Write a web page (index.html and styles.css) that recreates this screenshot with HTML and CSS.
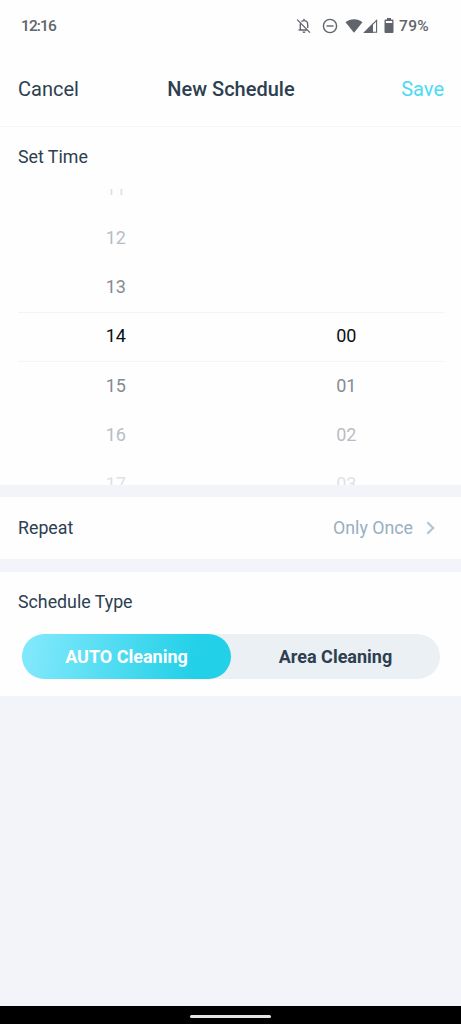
FILE: index.html
```html
<!DOCTYPE html>
<html lang="en">
<head>
<meta charset="utf-8">
<title>New Schedule</title>
<link rel="stylesheet" href="styles.css">
</head>
<body>
<div class="screen">
  <div class="status">
    <span class="clock">12:16</span>
    <div class="status-icons">
      <svg class="bell" width="16" height="16" viewBox="0 0 16 16" fill="none" stroke="currentColor" stroke-width="1.35">
        <path d="M1.2 1.6 14 14.6M5.5 3.6C6 3 7 2.6 8 2.6c2.300 0 3.700 1.700 3.700 3.900v3.400M4.300 5.400v6.300M2.600 12h9.200M8 .7v2"/>
        <path d="M6.500 13.500h3A1.500 1.500 0 0 1 6.500 13.500Z" fill="currentColor" stroke="none"/>
      </svg>
      <svg class="dnd" width="16" height="16" viewBox="0 0 16 16" fill="none" stroke="currentColor" stroke-width="1.4">
        <circle cx="8" cy="8" r="6.600"/><path d="M4.500 8h7"/>
      </svg>
      <svg class="wifi" width="18" height="14" viewBox="0 0 18 14" fill="currentColor"><path d="M.5 3.300C5.200-.7 12.800-.7 17.500 3.300L9 13.800Z"/></svg>
      <svg class="signal" width="15" height="14" viewBox="0 0 15 14"><path d="M1.700 13.300 13.600 1.400v11.900Z" fill="none" stroke="currentColor" stroke-width="1.100"/><path d="M.3 14 10 4.300V14Z" fill="currentColor"/></svg>
      <svg class="battery" width="10" height="15" viewBox="0 0 10 15" fill="currentColor"><path fill-rule="evenodd" d="M3 0h4v1.500h1.500q1 0 1 1V14q0 1-1 1h-7q-1 0-1-1V2.500q0-1 1-1H3ZM1.800 2.900v2.200h6.400V2.900Z"/></svg>
      <span class="percent">79%</span>
    </div>
  </div>
  <header class="header">
    <span class="cancel">Cancel</span>
    <h1 class="title">New Schedule</h1>
    <span class="save">Save</span>
  </header>
  <section class="time">
    <h2 class="label">Set Time</h2>
    <div class="picker">
      <div class="wheel">
        <span class="far">11</span><span class="mid">12</span><span class="near">13</span><span class="current">14</span><span class="near">15</span><span class="mid">16</span><span class="far">17</span>
      </div>
      <div class="wheel">
        <span></span><span></span><span></span><span class="current">00</span><span class="near">01</span><span class="mid">02</span><span class="far">03</span>
      </div>
      <div class="selection"></div>
    </div>
  </section>
  <section class="repeat">
    <h2 class="label">Repeat</h2>
    <span class="value">Only Once</span>
    <svg class="chevron" width="9" height="14" viewBox="0 0 9 14" fill="none" stroke="currentColor" stroke-width="2.2"><path d="m1.300 1.300 5.900 5.700-5.900 5.700"/></svg>
  </section>
  <section class="type">
    <h2 class="label">Schedule Type</h2>
    <div class="segments">
      <span class="segment active">AUTO Cleaning</span>
      <span class="segment">Area Cleaning</span>
    </div>
  </section>
  <div class="navbar"><div class="handle"></div></div>
</div>
</body>
</html>
```
FILE: styles.css
```css
* { box-sizing: border-box; }
body { margin: 0; font-family: Roboto, "Liberation Sans", sans-serif; color: #2d3f50; }
h1, h2 { margin: 0; font-weight: 400; }
svg { display: block; flex: none; }

.screen { height: 1024px; display: flex; flex-direction: column; background: #f3f4f9; overflow: hidden; }

.status { height: 52px; padding: 0 32px 1px 21px; display: flex; align-items: center; justify-content: space-between; background: #fefefe; color: #60656b; font-size: 15.5px; font-weight: 500; }
.clock { letter-spacing: -0.9px; }
.status-icons { display: flex; align-items: center; }
.percent { letter-spacing: 0.3px; }
.bell { margin-right: 10px; }
.dnd { margin-right: 7px; }
.wifi { margin-right: 0; }
.signal { margin-right: 6px; }
.battery { margin-right: 5px; }

.header { height: 75px; padding: 0 17px 0 18px; display: grid; grid-template-columns: 1fr auto 1fr; align-items: center; background: #fefefe; border-bottom: 1px solid #f4f5f6; font-size: 20px; line-height: 24px; }
.title { font-size: 20px; font-weight: 500; }
.save { color: #4cdaf2; text-align: right; }

.label { font-size: 17.8px; line-height: 22px; }

.time { height: 358px; padding-top: 19px; background: #fefefe; }
.time .label { padding-left: 18px; }
.picker { position: relative; height: 296px; margin-top: 21px; display: grid; grid-template-columns: 1fr 1fr; overflow: hidden; font-size: 18px; }
.wheel { height: 345.310px; margin-top: -25.660px; padding-left: 1px; display: grid; grid-template-rows: repeat(7, 1fr); place-items: center; }
.current { color: #0b0e12; }
.near { color: #868b91; }
.mid { color: #b8bdc3; }
.far { color: #dde2e8; }
.selection { position: absolute; left: 18px; right: 16px; top: 123px; height: 50px; border: solid #f3f4f5; border-width: 1px 0; }

.repeat { height: 62px; margin-top: 12px; padding: 0 26px 0 18px; display: flex; align-items: center; background: #fefefe; }
.repeat .label { padding-bottom: 1px; }
.value { margin-left: auto; padding-bottom: 2px; color: #98afc1; font-size: 17.8px; }
.chevron { margin-left: 13px; color: #b5c5d1; }

.type { height: 124px; margin-top: 13px; padding: 19px 21px 17px 22px; background: #fefefe; }
.type .label { margin-left: -4px; }
.segments { height: 45px; margin-top: 21px; display: grid; grid-template-columns: 1fr 1fr; border-radius: 23px; background: #ebf0f4; }
.segment { display: flex; align-items: center; justify-content: center; padding-bottom: 1px; border-radius: 23px; font-size: 18px; font-weight: 700; }
.active { color: #fff; background: linear-gradient(100deg, #80e8fb 5%, #22d0e8 82%); }

.navbar { height: 18px; margin-top: auto; display: flex; align-items: center; justify-content: center; background: #000; }
.handle { width: 81px; height: 3px; border-radius: 2px; background: #e2e5e8; margin-top: 2px; }
```
